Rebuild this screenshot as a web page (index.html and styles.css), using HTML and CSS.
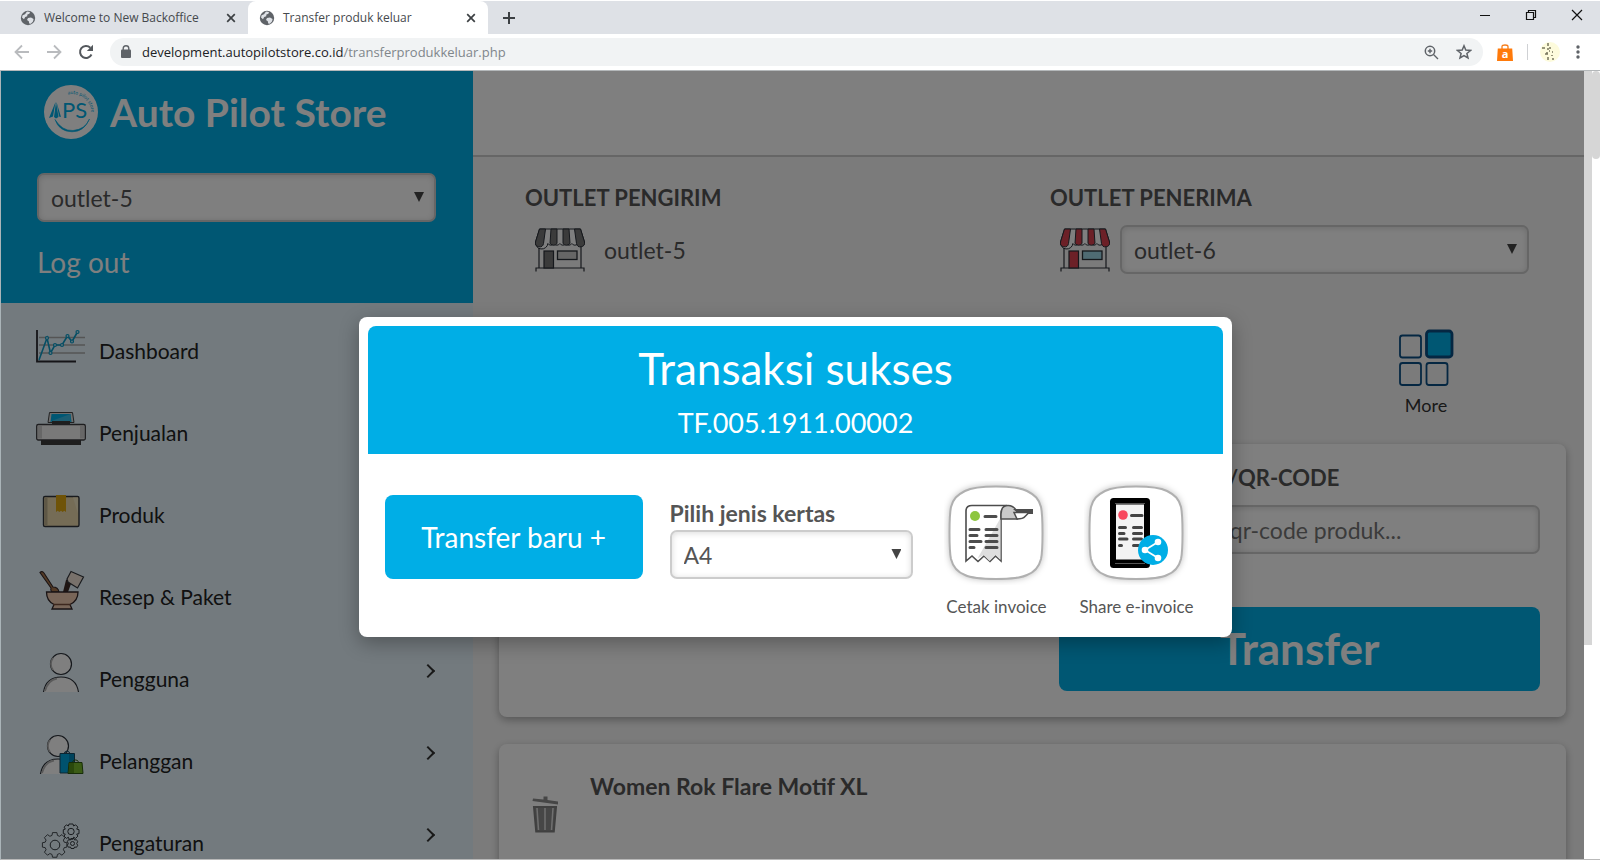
FILE: index.html
```html
<!DOCTYPE html>
<html lang="id">
<head>
<meta charset="utf-8">
<title>Transfer produk keluar</title>
<link rel="stylesheet" href="styles.css">
</head>
<body>
<svg class="defs" aria-hidden="true">
  <symbol id="globe" viewBox="0 0 16 16"><circle cx="8" cy="8" r="7.2" fill="#5f6368"/><path d="M2.6 5.2 5 4.2l2-2.6 3 .4-.6 1.8-2 .8-.2 1.6-2 .8L4 9.2l-2-1.800zM8 8l3-.4 2.600 1.400-.6 2.600-2.200 2.200-1.600-.2-.4-2.400L7 10z" fill="#dee1e6"/></symbol>
  <symbol id="cross" viewBox="0 0 10 10"><path d="M1.200 1.200l7.600 7.600M8.800 1.200L1.200 8.800" stroke="#3c4043" stroke-width="1.700" fill="none"/></symbol>
  <symbol id="store" viewBox="0 0 50 44">
    <path d="M4 16V40H46V16M1 43.500V40H49v3.500" fill="none" stroke="#2b3038" stroke-width="1.200"/>
    <path d="M4.500 1H45.500L49.500 14a3.500 3.500 0 0 1-6.600 1.500 3.500 3.500 0 0 1-6 0 3.500 3.500 0 0 1-6 0 3.500 3.500 0 0 1-6 0 3.500 3.500 0 0 1-6 0 3.500 3.500 0 0 1-6 0A3.500 3.500 0 0 1 .5 14z" fill="#fff" stroke="#2b3038" stroke-width="1"/>
    <path d="M4.500 1h6L8.500 15.500a4 4 0 0 1-8-1.500zM16 1h6v14.500q-3 3.500-7 0zM28 1h6l1 14.500q-4 3.500-7 0zM39.500 1h6l4 13a4 4 0 0 1-8 1.500z" fill="currentColor" stroke="#2b3038" stroke-width="1"/>
    <rect x="9" y="23" width="9.500" height="17" fill="currentColor" stroke="#2b3038" stroke-width="1.200"/>
    <rect x="22.500" y="23" width="19.500" height="8.500" class="pane" stroke="#2b3038" stroke-width="1.300"/>
  </symbol>
</svg>

<div class="browser">
  <div class="tabstrip">
    <div class="tab">
      <svg class="favicon"><use href="#globe"/></svg>
      <span class="tab-title">Welcome to New Backoffice</span>
      <button class="plain" aria-label="Close tab"><svg class="cross"><use href="#cross"/></svg></button>
    </div>
    <div class="tab active">
      <svg class="favicon"><use href="#globe"/></svg>
      <span class="tab-title">Transfer produk keluar</span>
      <button class="plain" aria-label="Close tab"><svg class="cross"><use href="#cross"/></svg></button>
    </div>
    <button class="plain new-tab" aria-label="New tab"><svg width="12" height="12" viewBox="0 0 12 12"><path d="M6 0v12M0 6h12" stroke="#3c4043" stroke-width="2"/></svg></button>
    <div class="window-buttons">
      <button class="plain" aria-label="Minimize"><svg width="12" height="12" viewBox="0 0 12 12"><path d="M1 6.500h10" stroke="#111"/></svg></button>
      <button class="plain" aria-label="Restore"><svg width="12" height="12" viewBox="0 0 12 12"><path d="M1.500 3.500h7v7h-7zM3.500 3V1.500h7v7H9" fill="none" stroke="#111" stroke-width="1.200"/></svg></button>
      <button class="plain" aria-label="Close"><svg width="12" height="12" viewBox="0 0 12 12"><path d="M1 1l10 10M11 1L1 11" stroke="#111" stroke-width="1.200"/></svg></button>
    </div>
  </div>
  <div class="toolbar">
    <button class="plain" aria-label="Back"><svg width="16" height="16" viewBox="0 0 16 16"><path d="M15 8H2M8 1.500L1.500 8 8 14.500" fill="none" stroke="#b9bbbe" stroke-width="1.800"/></svg></button>
    <button class="plain" aria-label="Forward"><svg width="16" height="16" viewBox="0 0 16 16"><path d="M1 8h13M8 1.500L14.500 8 8 14.500" fill="none" stroke="#b9bbbe" stroke-width="1.800"/></svg></button>
    <button class="plain" aria-label="Reload"><svg width="16" height="16" viewBox="0 0 16 16"><path d="M13.500 10.500A6 6 0 1 1 12.300 3.700" fill="none" stroke="#54585d" stroke-width="2"/><path d="M15 .8V7H8.800z" fill="#54585d"/></svg></button>
    <div class="omnibox">
      <svg width="10" height="14" viewBox="0 0 10 14"><rect y="4.500" width="10" height="8.500" rx="1" fill="#5f6368"/><path d="M2.200 5V3.500a2.800 2.800 0 0 1 5.600 0V5" fill="none" stroke="#5f6368" stroke-width="1.400"/></svg>
      <span class="url">development.autopilotstore.co.id<span class="path">/transferprodukkeluar.php</span></span>
      <svg width="15" height="15" viewBox="0 0 15 15"><circle cx="6" cy="6" r="4.700" fill="none" stroke="#5f6368" stroke-width="1.500"/><path d="M9.500 9.500l4.500 4.500M3.800 6h4.400M6 3.800v4.400" stroke="#5f6368" stroke-width="1.400"/></svg>
      <svg width="16" height="16" viewBox="0 0 16 16"><path d="M8 1.800l1.800 4.300 4.700.4-3.600 3 1.100 4.500L8 11.600 4 14l1.100-4.500-3.600-3 4.700-.4z" fill="none" stroke="#5f6368" stroke-width="1.500"/></svg>
    </div>
    <svg class="ext" width="16" height="17" viewBox="0 0 16 17"><path d="M5 5V2.500Q5 1 8 1t3 1.500V5" fill="none" stroke="#f57c1a" stroke-width="1.300"/><path d="M.8 4.500h14.400L16 17H0z" fill="#ff7a0a"/><text x="8" y="13.500" text-anchor="middle" class="ext-letter">a</text></svg>
    <span class="divider"></span>
    <svg width="20" height="20" viewBox="0 0 20 20"><circle cx="10" cy="10" r="10" fill="#fdfbdc"/><path d="M8 1v3M2 6h3M7 7h2M9 9h1M5 12h3M8 15v3M12 17h2M12 10h1M10 5v2M7 10v2M12 13v1" stroke="#77755c" stroke-width="1.500"/></svg>
    <button class="plain" aria-label="Menu"><svg width="4" height="14" viewBox="0 0 4 14"><g fill="#5f6368"><circle cx="2" cy="2" r="1.700"/><circle cx="2" cy="7" r="1.700"/><circle cx="2" cy="12" r="1.700"/></g></svg></button>
  </div>

  <div class="viewport">
    <div class="page">
      <aside class="sidebar">
        <div class="brand-panel">
          <div class="brand">
            <svg width="54" height="54" viewBox="0 0 54 54" aria-hidden="true">
              <circle cx="27" cy="27" r="27" fill="#fff"/>
              <path d="M11.500 17L5 33l4-1.500zM12 17l2.500 15-2.500 1.500-2-1.500zM12.500 17L17 32l-2-.5z" fill="#00aee6"/>
              <text x="18" y="33" class="logo-aps">PS</text>
              <path id="ring" d="M24 9.500A19 19 0 0 1 43 40" fill="none"/>
              <text class="logo-ring"><textPath href="#ring">auto pilot store</textPath></text>
              <path d="M11 34.500Q18 46 29 45.500 41 44.500 45.500 34 40 47 28 46.800 15 46.500 11 34.500z" fill="#00aee6" stroke="#00aee6" stroke-width=".6"/>
            </svg>
            <span class="brand-name">Auto Pilot Store</span>
          </div>
          <div class="select-box">
            <select aria-label="Outlet"><option>outlet-5</option></select>
          </div>
          <a class="logout" href="#">Log out</a>
        </div>
        <nav class="menu">
          <a href="#"><svg viewBox="0 0 50 50"><path d="M3 16.500h46M3 24h46M3 32h46" stroke="#aaa" stroke-width="1.500"/><path d="M1 9v31.500h39" fill="none" stroke="#2a2a30" stroke-width="1.800"/><path d="M3 39l8-22 3.500 15L19 24h7l5.500-9 4.500 5.500 5.500-9.500" fill="none" stroke="#0b9cc9" stroke-width="1.600"/><g fill="#bfe6f5" stroke="#0b9cc9" stroke-width="1.200"><circle cx="11" cy="17" r="1.500"/><circle cx="14.500" cy="32" r="1.500"/><circle cx="19" cy="24" r="1.500"/><circle cx="26" cy="24" r="1.500"/><circle cx="31.500" cy="15" r="1.500"/><circle cx="36" cy="20.500" r="1.500"/><circle cx="41.500" cy="11" r="1.500"/></g></svg><span>Dashboard</span></a>
          <a href="#"><svg viewBox="0 0 50 50"><path d="M13.500 9.500h23l1.500 10H12z" fill="#ddd" stroke="#444" stroke-width="1"/><path d="M15.500 11h19l1 8h-21z" fill="#00aee6"/><path d="M15.500 18l19-7v8h-20z" fill="#38bce6"/><path d="M16 18h18v4H16zM5 36h40v6H5z" fill="#3c3c3c"/><rect x=".7" y="21.500" width="48.600" height="15.500" rx="1.500" fill="#f2f2f2" stroke="#3c3c40" stroke-width="1.300"/><path d="M2 23h4v12.500H2zM44 23h4v12.500h-4z" fill="#cfcfcf"/></svg><span>Penjualan</span></a>
          <a href="#"><svg viewBox="0 0 50 50"><rect x="7.500" y="11.500" width="35.500" height="30" rx="1.500" fill="#ead9ac" stroke="#33363c" stroke-width="1.400"/><path d="M8.500 12.500h3v28h-3z" fill="#bdaf8d"/><path d="M37 12.500h5v16z" fill="#f3e6c2"/><path d="M20 10h10v17l-1.700-1.200-1.600 1.200-1.700-1.200-1.700 1.200-1.600-1.200L20 27z" fill="#dfa60e"/></svg><span>Produk</span></a>
          <a href="#"><svg viewBox="0 0 50 50"><path d="M4 5.500q2-2 4 .5l9 14q5 0 6 5H16q-2-2-1-4z" fill="#a9764c" stroke="#33272a" stroke-width="1.100"/><path d="M30 13q5-2 6 1l-4 11h-5z" fill="#3e2a26"/><path d="M35 4.500l12.500 5.500-6 11-9.500-6-1-3z" fill="#f1e3d6" stroke="#33363c" stroke-width="1.200"/><path d="M10.500 25h31.500q0 9-8 12.500l2 4.500H16l2-4.500q-7.500-3.500-7.500-12.500z" fill="#f0cbb0" stroke="#33272a" stroke-width="1.300"/><path d="M17 37.500h18" stroke="#7a4e3c" stroke-width="1.500"/></svg><span>Resep &amp; Paket</span></a>
          <a href="#"><svg viewBox="0 0 50 50"><circle cx="25" cy="15" r="10.500" fill="#fff" stroke="#2b3038" stroke-width="1.200"/><path d="M7.500 43q2.500-15 17.500-15t17.500 15" fill="#fff" stroke="#2b3038" stroke-width="1.200"/><path d="M17 9a10 10 0 0 0 0 12M9 42q3-11 12-12.500" fill="none" stroke="#b5b5b5" stroke-width="1.800"/></svg><span>Pengguna</span><i class="chevron"></i></a>
          <a href="#"><svg viewBox="0 0 50 50"><circle cx="22" cy="15" r="10.500" fill="#fff" stroke="#2b3038" stroke-width="1.200"/><path d="M4.500 43q2.500-15 17.500-15t15 15" fill="#fff" stroke="#2b3038" stroke-width="1.200"/><path d="M14 9a10 10 0 0 0 0 12M6 42q3-11 12-12.500" fill="none" stroke="#b5b5b5" stroke-width="1.800"/><path d="M28 24q0-4 3-4t3 4" fill="none" stroke="#1d516d"/><path d="M24 22.500h14.500V42H24z" fill="#00a5dc" stroke="#1d4b60"/><path d="M33 23h5v18h-5z" fill="#0086b8"/><path d="M36 34q0-5 3.500-5t3.500 5" fill="none" stroke="#2f5a12"/><path d="M33 31.500h13l1 11H32z" fill="#76b82a" stroke="#2f5a12"/><path d="M33 32h5v10h-5z" fill="#559018"/></svg><span>Pelanggan</span><i class="chevron"></i></a>
          <a href="#"><svg viewBox="0 0 50 50"><g fill="none" stroke="#33383e" stroke-width="1" stroke-linejoin="round"><path d="M16.500 20h5l.6 3.200 2.400 1 2.700-1.900 3.500 3.500-1.900 2.700 1 2.400 3 .6v5l-3 .6-1 2.400 1.900 2.700-3.500 3.500-2.700-1.900-2.400 1-.6 3.200h-5l-.6-3.200-2.400-1-2.700 1.900-3.500-3.500 1.900-2.700-1-2.400-3.200-.6v-5l3.200-.6 1-2.400-1.900-2.700 3.500-3.500 2.700 1.900 2.400-1z" transform="translate(2 2) scale(.88)"/><circle cx="19" cy="32" r="4.800"/><path d="M33 11h4l.6 2 2-1.200 2.300 2.300-1.200 2 2.300.6v4l-2.300.4 1.200 2-2.300 2.300-2-1.200-.6 2h-4l-.6-2-2 1.200-2.300-2.300 1.200-2-2-.4v-4l2-.6-1.200-2 2.300-2.300 2 1.200z"/><circle cx="35" cy="18.500" r="3.200"/><path d="M35 25.500h3l.5 1.500 2-.3 1.200 2-1 1.800 1 1.800-1.200 2-2-.3-.5 1.500h-3l-.5-1.500-2 .3-1.200-2 1-1.800-1-1.800 1.200-2 2 .3z"/><circle cx="36.500" cy="30.500" r="2"/></g></svg><span>Pengaturan</span><i class="chevron"></i></a>
        </nav>
      </aside>

      <main class="main">
        <header class="topbar"></header>
        <div class="content">
          <div class="outlets">
            <section>
              <h2 class="label">OUTLET PENGIRIM</h2>
              <div class="outlet-row">
                <svg class="store gray"><use href="#store"/></svg>
                <span class="outlet-name">outlet-5</span>
              </div>
            </section>
            <section>
              <label class="label" for="receiver">OUTLET PENERIMA</label>
              <div class="outlet-row">
                <svg class="store red"><use href="#store"/></svg>
                <div class="select-box grow"><select id="receiver"><option>outlet-6</option></select></div>
              </div>
            </section>
          </div>
          <div class="actions">
            <button class="plain more">
              <svg width="56" height="58" viewBox="0 0 56 58"><g fill="#f7f7f7" stroke="#0b4f85" stroke-width="1.800"><rect x="2" y="6.500" width="21" height="22" rx="2.500"/><rect x="2" y="34" width="21" height="22" rx="2.500"/><rect x="28.500" y="34" width="21" height="22" rx="2.500"/><rect x="28.500" y="2" width="25.500" height="26" rx="3" fill="#00aee6" stroke-width="2.800"/></g></svg>
              <span>More</span>
            </button>
          </div>
          <section class="card scan">
            <div class="scan-form">
              <label class="label" for="code">SCAN BARCODE/QR-CODE</label>
              <input id="code" type="text" placeholder="Scan barcode / qr-code produk...">
              <button class="transfer">Transfer</button>
            </div>
          </section>
          <section class="card item">
            <button class="plain" aria-label="Hapus"><svg width="26" height="38" viewBox="0 0 26 38"><path d="M1 3.500l10.500 1V1.500h4V5L26 6.500v3L.5 6z" fill="#8c8c8c"/><path d="M2 12h22l-2.200 24.500H4.200z" fill="#8c8c8c" stroke="#808080" stroke-width="2"/><path d="M5 13l1.500 22M21 13l-1.500 22M13 13v22" stroke="#e0e0e0" stroke-width="1.500"/></svg></button>
            <h3>Women Rok Flare Motif XL</h3>
          </section>
        </div>
      </main>
      <div class="inner-scroll"></div>

      <div class="overlay">
        <section class="modal" role="dialog" aria-labelledby="modal-title">
          <header class="modal-head">
            <h1 id="modal-title">Transaksi sukses</h1>
            <p>TF.005.1911.00002</p>
          </header>
          <div class="modal-body">
            <button class="new-transfer">Transfer baru +</button>
            <div class="paper">
              <label for="paper">Pilih jenis kertas</label>
              <div class="select-box"><select id="paper"><option>A4</option></select></div>
            </div>
            <button class="plain tile">
              <svg width="104" height="104" viewBox="0 0 104 104">
                <path class="squircle" d="M52 5.500C66 5.500 76 6.500 83 10c8 4 12 8 14 16 1.500 7 1.500 16 1.500 26s0 19-1.500 26c-2 8-6 13-14 16-7 3.500-17 4-31 4s-24-.5-31-4c-8-3-12-8-14-16-1.500-7-1.500-16-1.500-26s0-19 1.500-26c2-8 6-12 14-16 7-3.500 17-4.500 31-4.500z"/>
                <path d="M22 80V30q0-5.500 6-5.500h35q-6 3-6 9V80l-5.500-5-5.500 5.500-6-5.500-6 5.500-6-5.500z" fill="#fff" stroke="#4d4d4d" stroke-width="1.600"/>
                <path d="M56.500 37v42l-5-5-6 6-6-6-6 3.500z" fill="#dedede"/>
                <path d="M57 38V33q0-8.500 7-8.500t10.500 9l-1 4.500z" fill="#c9c9c9" stroke="#4d4d4d" stroke-width="1.500"/>
                <path d="M69 28h20v5H75z" fill="#4d4d4d"/><path d="M70 31.500h15l-4 4q-2 2.500-8 2.500z" fill="#fff" stroke="#4d4d4d" stroke-width="1.500"/>
                <circle cx="31" cy="35" r="5" fill="#8dc63f"/>
                <path d="M41 35.500h11M26 48.500h9M42 48.500h11M26 54.500h7M42 54.500h11M26 60.500h11M42 60.500h11M26 66.500h4M42 66.500h11" stroke="#4d4d4d" stroke-width="3" stroke-linecap="round"/>
              </svg>
              <span>Cetak invoice</span>
            </button>
            <button class="plain tile">
              <svg width="104" height="104" viewBox="0 0 104 104">
                <path class="squircle" d="M52 5.500C66 5.500 76 6.500 83 10c8 4 12 8 14 16 1.500 7 1.500 16 1.500 26s0 19-1.500 26c-2 8-6 13-14 16-7 3.500-17 4-31 4s-24-.5-31-4c-8-3-12-8-14-16-1.500-7-1.500-16-1.500-26s0-19 1.500-26c2-8 6-12 14-16 7-3.500 17-4.500 31-4.500z"/>
                <rect x="26" y="17" width="40" height="70" rx="3.500" fill="#000"/>
                <path d="M31 22.500h30M31 82.500h30" stroke="#555" stroke-width="1"/>
                <rect x="32" y="23.500" width="28" height="55" fill="#f3f3f3"/>
                <circle cx="39" cy="34" r="4.800" fill="#f8485e"/>
                <path d="M47.500 34.500H58M35.500 46.500h6M49.500 46.500h8M35.500 52.500h4.500M49.500 52.500h8M35.500 58h7.500M49.500 58h8M35.500 64.500h2M49.500 64.500h5" stroke="#444" stroke-width="3" stroke-linecap="round"/>
                <circle cx="69" cy="69" r="15" fill="#00aee6"/>
                <path d="M74 61L61 69l13 8" fill="none" stroke="#fff" stroke-width="1.800"/><g fill="#fff"><circle cx="74" cy="61" r="3.300"/><circle cx="61" cy="69" r="3.300"/><circle cx="74" cy="77" r="3.300"/></g>
              </svg>
              <span>Share e-invoice</span>
            </button>
          </div>
        </section>
      </div>
    </div>
    <div class="outer-scroll"></div>
  </div>
</div>
</body>
</html>
```
FILE: styles.css
```css
* { box-sizing: border-box; }
body { margin: 0; font-family: Lato, sans-serif; color: #555; background: #fff; }
h1, h2, h3, p { margin: 0; }
a { text-decoration: none; color: inherit; }
svg { display: block; flex: none; }
button, input, select { font: inherit; color: inherit; }
.plain { border: 0; padding: 0; background: none; display: flex; align-items: center; justify-content: center; }
.defs { position: absolute; width: 0; height: 0; }

.browser { display: flex; flex-direction: column; height: 100vh; overflow: hidden; }

/* browser chrome */
.tabstrip { display: flex; align-items: stretch; height: 34px; flex: none; background: #dee1e6; border-top: 1px solid #fff; font: 12px "Open Sans", "Noto Sans", sans-serif; color: #45494d; }
.tab { display: flex; align-items: center; width: 240px; padding: 0 12px 0 11px; gap: 8px; }
.tab:first-child { width: 248px; padding-left: 20px; }
.tab.active { background: #fff; border-radius: 8px 8px 0 0; }
.tab-title { flex: 1; white-space: nowrap; }
.favicon { width: 16px; height: 16px; }
.cross { width: 10px; height: 10px; }
.new-tab { width: 42px; }
.window-buttons { display: flex; margin-left: auto; padding-bottom: 6px; }
.window-buttons button { width: 46px; }
.toolbar { display: flex; align-items: center; height: 37px; flex: none; padding: 0 20px 0 14px; gap: 16px; background: #fff; border-bottom: 1px solid #b4b8ba; }
.omnibox { display: flex; align-items: center; flex: 1; height: 28px; gap: 11px; padding: 0 11px; border-radius: 14px; background: #f1f3f4; font: 13px "Open Sans", "Noto Sans", sans-serif; color: #202124; }
.omnibox svg + svg { margin-left: 6px; }
.url { flex: 1; white-space: nowrap; }
.path { color: #80868b; }
.ext { margin: 0 -2px; }
.ext-letter { font: bold 11px "Open Sans", sans-serif; fill: #fff; }
.divider { width: 1px; height: 16px; background: #cfd1d4; margin-right: -4px; }

/* page and scrollbars */
.viewport { display: flex; flex: 1; min-height: 0; border-left: 1px solid #aab4b8; border-bottom: 1px solid #b9b9b9; }
.page { position: relative; display: flex; flex: 1; min-width: 0; overflow: hidden; }
.inner-scroll { position: relative; z-index: 2; width: 8px; background: linear-gradient(#d6d6d6, #d6d6d6) no-repeat 0 0 / 8px 574px #fff; }
.outer-scroll { width: 8px; height: 88px; border-radius: 4px; background: #d6d6d6; }

/* sidebar */
.sidebar { display: flex; flex-direction: column; width: 472px; flex: none; background: #e6f5fd; }
.brand-panel { flex: none; padding: 14px 37px 0 36px; height: 232px; background: #00aee6; }
.brand { display: flex; align-items: center; gap: 12px; padding-left: 7px; margin-bottom: 34px; }
.brand-name { font-size: 39px; line-height: 54px; font-weight: bold; color: #fff; }
.logo-aps { font: 22px Lato, sans-serif; fill: #00aee6; }
.logo-ring { font: 5px Lato, sans-serif; fill: #00aee6; }
.logout { display: inline-block; margin-top: 22px; font-size: 28px; line-height: 36px; color: #fff; }
.menu { flex: none; padding: 2px 36px 0 35px; }
.menu a { display: flex; align-items: center; height: 82px; gap: 13px; font-size: 21px; color: #222; }
.menu svg { width: 50px; height: 50px; }
.menu span { padding-top: 8px; flex: 1; }
.chevron { width: 10px; height: 10px; margin: 0 4px 6px 0; border: solid #333; border-width: 2px 2px 0 0; transform: rotate(45deg); }

.select-box { position: relative; }
.select-box::after { content: ""; position: absolute; right: 12px; top: 19px; width: 10px; height: 10px; background: #444; clip-path: polygon(0 0, 100% 0, 50% 100%); pointer-events: none; }
select, input { display: block; width: 100%; height: 49px; padding: 0 12px; border: 2px solid #ccc; border-radius: 7px; background: #fff; box-shadow: inset 0 1px 6px rgba(0, 0, 0, .15); font-size: 23px; appearance: none; }

/* main column */
.main { flex: 1; min-width: 0; background: #f7f7f7; }
.topbar { height: 86px; background: #fff; border-bottom: 2px solid #ccc; }
.content { padding: 26px 18px 0 26px; }
.outlets { display: grid; grid-template-columns: 1fr 1fr; gap: 46px; padding: 0 37px 0 26px; }
.label { display: block; font-size: 22px; line-height: 30px; font-weight: bold; color: #555; white-space: nowrap; }
.outlet-row { display: flex; align-items: center; height: 49px; margin-top: 12px; padding-left: 10px; gap: 10px; }
.store { width: 50px; height: 44px; }
.gray { color: #777; --pane: #ccc; }
.red { color: #d8404f; --pane: #9fd6e6; }
.pane { fill: var(--pane); }
.outlet-name { font-size: 23px; padding-left: 9px; }
.grow { flex: 1; }
.actions { display: flex; justify-content: flex-end; padding: 55px 112px 0 0; height: 170px; }
.more { flex-direction: column; justify-content: flex-start; gap: 7px; font-size: 18px; color: #333; }
.card { background: #fff; border-radius: 8px; box-shadow: 0 3px 8px rgba(0, 0, 0, .3); }
.scan { display: flex; justify-content: flex-end; padding: 19px 26px 26px; margin-bottom: 27px; }
.scan-form { width: 481px; }
.scan-form input { margin: 12px 0 53px; }
.scan-form input::placeholder { color: #777; opacity: 1; }
.transfer { width: 100%; height: 84px; padding: 0 0 3px; border: 0; border-radius: 8px; background: #00aee6; color: #fff; font-size: 44px; font-weight: bold; }
.item { display: flex; align-items: flex-start; gap: 32px; padding: 27px 33px; height: 140px; }
.item button { margin-top: 24px; }
.item h3 { font-size: 23px; line-height: 30px; }

/* result dialog */
.overlay { position: absolute; inset: 0; z-index: 1; display: flex; justify-content: center; align-items: flex-start; padding: 246px 2px 0 0; background: rgba(0, 0, 0, .5); }
.modal { width: 55%; padding: 9px; border-radius: 8px; background: #fff; box-shadow: 0 6px 20px rgba(0, 0, 0, .3); }
.modal-head { padding: 15px 0 13px; border-radius: 8px 8px 0 0; background: #00aee6; color: #fff; text-align: center; }
.modal-head h1 { font-size: 44px; line-height: 54px; font-weight: normal; }
.modal-head p { font-size: 27px; line-height: 36px; padding-top: 10px; }
.modal-body { display: flex; align-items: flex-start; padding: 27px 17px 9px; }
.new-transfer { width: 258px; height: 84px; margin: 14px 27px 0 0; border: 0; border-radius: 8px; background: #00aee6; color: #fff; font-size: 28px; }
.paper { flex: 1; padding-top: 17px; margin-right: 13px; font-size: 23px; }
.paper label { display: block; line-height: 30px; font-weight: bold; margin-bottom: 2px; }
.tile { flex-direction: column; width: 140px; font-size: 17px; line-height: 24px; gap: 10px; white-space: nowrap; }
.squircle { fill: #fff; stroke: #b0b0b0; stroke-width: 2; filter: drop-shadow(0 0 3px rgba(0, 0, 0, .25)); }
```
